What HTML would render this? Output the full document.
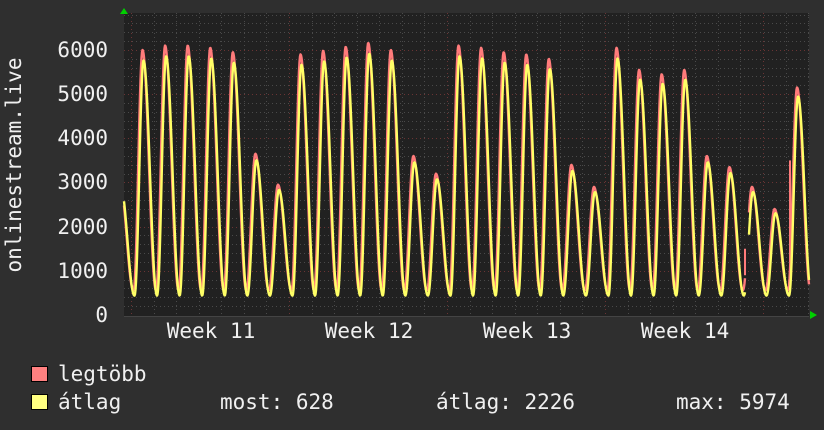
<!DOCTYPE html>
<html><head><meta charset="utf-8"><style>
html,body{margin:0;padding:0;background:#2f2f2f;}
svg{display:block}
text{font-family:"DejaVu Sans Mono","Liberation Mono",monospace;font-size:21px;fill:#f0f0f0}
</style></head><body>
<svg id="g" width="824" height="430" viewBox="0 0 824 430" xmlns="http://www.w3.org/2000/svg">
<rect width="824" height="430" fill="#2f2f2f"/>
<rect x="124" y="13" width="685" height="303" fill="#212121"/>
<g id="grid"></g>
<g id="data"></g>
<polygon points="120,14 128,14 124,8" fill="#00d000"/>
<polygon points="810,311 810,319 817,315" fill="#00d000"/>
<text x="108" y="57" text-anchor="end">6000</text>
<text x="108" y="101" text-anchor="end">5000</text>
<text x="108" y="145" text-anchor="end">4000</text>
<text x="108" y="189" text-anchor="end">3000</text>
<text x="108" y="234" text-anchor="end">2000</text>
<text x="108" y="278" text-anchor="end">1000</text>
<text x="108" y="322" text-anchor="end">0</text>
<text transform="translate(21,165) rotate(-90)" text-anchor="middle">onlinestream.live</text>
<text x="211" y="338" text-anchor="middle">Week 11</text>
<text x="369" y="338" text-anchor="middle">Week 12</text>
<text x="527" y="338" text-anchor="middle">Week 13</text>
<text x="685" y="338" text-anchor="middle">Week 14</text>
<rect x="31.5" y="366.5" width="16" height="15" fill="#ff8080" stroke="#000"/>
<rect x="31.5" y="394.5" width="16" height="15" fill="#ffff80" stroke="#000"/>
<text x="58" y="381">legtöbb</text>
<text x="58" y="409">átlag</text>
<text x="220" y="409">most: 628</text>
<text x="436" y="409">átlag: 2226</text>
<text x="676" y="409">max: 5974</text>
</svg>
<script>
(function(){
var ns="http://www.w3.org/2000/svg";
var grid=document.getElementById("grid"),data=document.getElementById("data");
function line(p,x1,y1,x2,y2,c,d,w){var l=document.createElementNS(ns,"line");l.setAttribute("x1",x1);l.setAttribute("y1",y1);l.setAttribute("x2",x2);l.setAttribute("y2",y2);l.setAttribute("stroke",c);l.setAttribute("stroke-width",w||1);if(d)l.setAttribute("stroke-dasharray",d);p.appendChild(l);}
function Y(v){return 315-v*0.04417;}
for(var v=200;v<=6800;v+=200){var y=Math.round(Y(v))+0.5;if(y<13)break;line(grid,124,y,809,y,v%1000==0?"#6a3434":"#4a4a4a","1,3");}
for(var k=0;k<31;k++){var x=Math.round(131+22.57*k)+0.5;if(x>809)break;line(grid,x,13,x,316,(k%7==0)?"#6a3434":"#4a4a4a","1,3");}
line(grid,124,316.5,809,316.5,"#444");
var P=[6000,6100,6100,6050,5950,3650,2950,5900,5980,6070,6160,6000,3600,3200,6100,6050,5950,5900,5800,3400,2900,6050,5550,5450,5550,3600,3350,2900,2400,5150];
function val(x,scale,base){
 var f=(x-134)/22.57,i=Math.floor(f),ph=f-i;
 var pk=i<0?3000:(i<P.length?P[i]:P[P.length-1]);
 var t;
 if(ph<0.4)t=ph/0.4;else t=1-(ph-0.4)/0.6;
 t=Math.max(0,t);
 var s=(1-Math.cos(Math.PI*t))/2;
 s=Math.pow(s,1.05);
 if(t>0.92)s=Math.max(s,0.97+0.03*(t-0.92)/0.08);
 return base+(pk*scale-base)*s;
}
function poly(scale,base,col,off){
 var segs=[[],[]];var s=0;
 for(var x=124;x<=809;x+=0.5){
  if(x>745&&x<749){s=1;continue;}
  var v=val(x-off,scale,base);
  segs[s].push(x+","+Y(v).toFixed(1));
 }
 segs.forEach(function(sg){var p=document.createElementNS(ns,"polyline");p.setAttribute("points",sg.join(" "));p.setAttribute("fill","none");p.setAttribute("stroke",col);p.setAttribute("stroke-width","2.4");p.setAttribute("stroke-linejoin","round");data.appendChild(p);});
}
poly(1.0,560,"#ff7b7b",-0.5);
line(data,790,Y(3500),790,Y(1200),"#ff7b7b",null,2);
line(data,745,Y(1500),745,Y(900),"#ff7b7b",null,2);
poly(0.96,440,"#ffff66",0.5);
})();
</script>
</body></html>
